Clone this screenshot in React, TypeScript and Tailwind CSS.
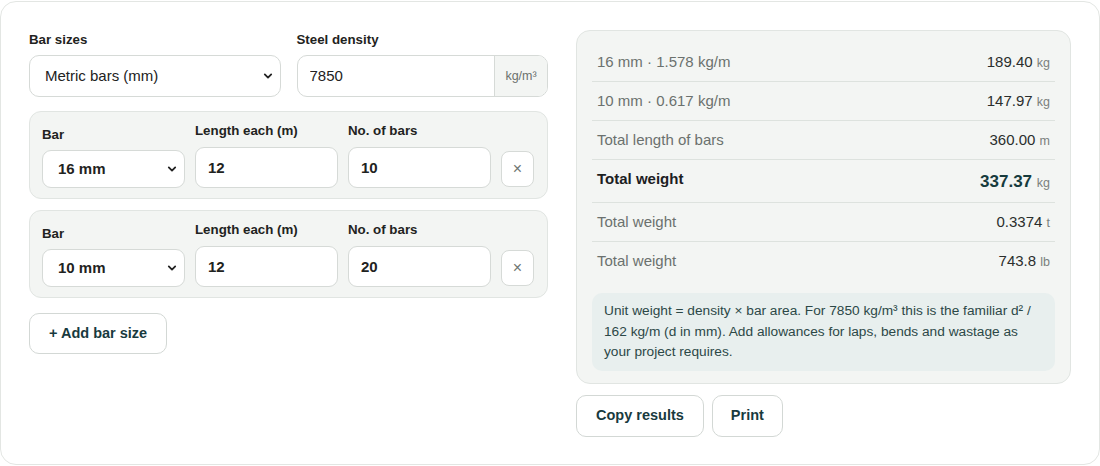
import React from 'react';

const font = { fontFamily: '"Liberation Sans", Arial, sans-serif' };

function Chevron() {
  return (
    <svg
      className="pointer-events-none absolute right-[8px] top-1/2 -translate-y-1/2"
      width="10"
      height="10"
      viewBox="0 0 10 10"
      fill="none"
    >
      <path d="M1.8 3.4 5 6.6l3.2-3.2" stroke="#222" strokeWidth="1.8" strokeLinecap="round" strokeLinejoin="round" />
    </svg>
  );
}

function BarRow({ size, length, count }: { size: string; length: string; count: string }) {
  return (
    <div className="grid grid-cols-[143px_143px_143px_33px] items-end gap-[10px] rounded-[12px] border border-[#e1e5e2] bg-[#f3f5f3] px-[12px] pb-[10px] pt-[9px]">
      <div className="flex flex-col">
        <span className="mb-[5px] text-[13.3px] font-bold leading-[20px] text-[#1f2321]">Bar</span>
        <div className="relative">
          <select
            defaultValue={size}
            className="h-[38px] w-full appearance-none rounded-[9px] border border-[#d6dad7] bg-white pl-[15px] text-[15px] font-bold text-[#1f2321] outline-none"
          >
            <option>{size}</option>
          </select>
          <Chevron />
        </div>
      </div>
      <div className="flex flex-col">
        <span className="mb-[6px] text-[13.3px] font-bold leading-[20px] text-[#1f2321]">Length each (m)</span>
        <input
          defaultValue={length}
          className="h-[41px] w-full rounded-[9px] border border-[#d6dad7] bg-white px-[12px] text-[15px] font-bold text-[#1f2321] outline-none"
        />
      </div>
      <div className="flex flex-col">
        <span className="mb-[6px] text-[13.3px] font-bold leading-[20px] text-[#1f2321]">No. of bars</span>
        <input
          defaultValue={count}
          className="h-[41px] w-full rounded-[9px] border border-[#d6dad7] bg-white px-[12px] text-[15px] font-bold text-[#1f2321] outline-none"
        />
      </div>
      <button className="mb-px flex h-[36px] w-[33px] items-center justify-center rounded-[8px] border border-[#d6dad7] bg-white text-[16px] text-[#707673]">
        ×
      </button>
    </div>
  );
}

function ResultRow({ label, value, unit, last }: { label: string; value: string; unit: string; last?: boolean }) {
  return (
    <div className={`flex h-[39px] items-center justify-between px-[5px] ${last ? '' : 'border-b border-[#dde2de]'}`}>
      <span className="text-[15px] text-[#6b716e]">{label}</span>
      <span className="text-[15px] text-[#2a2e2d]">
        {value} <span className="text-[12.5px] text-[#7a807d]">{unit}</span>
      </span>
    </div>
  );
}

export default function App() {
  return (
    <div className="h-[466px] w-[1100px] bg-white pt-px" style={font}>
      <div className="grid h-[464px] grid-cols-[519px_495px] gap-[28px] rounded-[16px] border border-[#e3e6e3] bg-white p-[28px]">
        {/* inputs */}
        <div className="flex flex-col">
          <div className="grid grid-cols-2 gap-[16px]">
            <div className="flex flex-col">
              <span className="mb-[5px] text-[13.3px] font-bold leading-[20px] text-[#1f2321]">Bar sizes</span>
              <div className="relative">
                <select
                  defaultValue="metric"
                  className="h-[42px] w-full appearance-none rounded-[10px] border border-[#d6dad7] bg-white pl-[15px] text-[15px] text-[#222] outline-none"
                >
                  <option value="metric">Metric bars (mm)</option>
                </select>
                <Chevron />
              </div>
            </div>
            <div className="flex flex-col">
              <span className="mb-[5px] text-[13.3px] font-bold leading-[20px] text-[#1f2321]">Steel density</span>
              <div className="flex h-[42px] overflow-hidden rounded-[10px] border border-[#d6dad7] bg-white">
                <input
                  defaultValue="7850"
                  className="w-0 flex-1 px-[12px] text-[15px] text-[#222] outline-none"
                />
                <span className="flex w-[53px] items-center justify-center border-l border-[#d6dad7] bg-[#f3f5f3] text-[12.5px] text-[#6b716e]">
                  kg/m³
                </span>
              </div>
            </div>
          </div>

          <div className="mt-[14px] flex flex-col gap-[11px]">
            <BarRow size="16 mm" length="12" count="10" />
            <BarRow size="10 mm" length="12" count="20" />
          </div>

          <div className="mt-[15px]">
            <button className="h-[41px] rounded-[10px] border border-[#d3d8d5] bg-white px-[19px] text-[14.5px] font-bold text-[#183a3e]">
              + Add bar size
            </button>
          </div>
        </div>

        {/* results */}
        <div className="flex flex-col">
          <div className="rounded-[14px] border border-[#e1e5e2] bg-[#f3f5f3] px-[15px] pb-[12px] pt-[12px]">
            <ResultRow label="16 mm · 1.578 kg/m" value="189.40" unit="kg" />
            <ResultRow label="10 mm · 0.617 kg/m" value="147.97" unit="kg" />
            <ResultRow label="Total length of bars" value="360.00" unit="m" />
            <div className="flex h-[43px] items-center justify-between border-b border-[#dde2de] px-[5px]">
              <span className="-mt-[3px] text-[15px] font-bold text-[#1c201f]">Total weight</span>
              <span className="mt-[2px] text-[17px] font-bold text-[#163b3d]">
                337.37 <span className="text-[12.5px] font-normal text-[#7a807d]">kg</span>
              </span>
            </div>
            <ResultRow label="Total weight" value="0.3374" unit="t" />
            <ResultRow label="Total weight" value="743.8" unit="lb" last />
            <div className="mt-[12px] rounded-[10px] bg-[#e8efee] px-[12px] py-[8px] text-[13.7px] leading-[20.5px] text-[#2c4847]">
              Unit weight = density × bar area. For 7850 kg/m³ this is the familiar d² / 162 kg/m (d in mm). Add
              allowances for laps, bends and wastage as your project requires.
            </div>
          </div>
          <div className="mt-[11px] flex gap-[8px]">
            <button className="h-[42px] rounded-[10px] border border-[#d3d8d5] bg-white px-[19px] text-[14.5px] font-bold text-[#183a3e]">
              Copy results
            </button>
            <button className="h-[42px] rounded-[10px] border border-[#d3d8d5] bg-white px-[18px] text-[14.5px] font-bold text-[#183a3e]">
              Print
            </button>
          </div>
        </div>
      </div>
    </div>
  );
}
